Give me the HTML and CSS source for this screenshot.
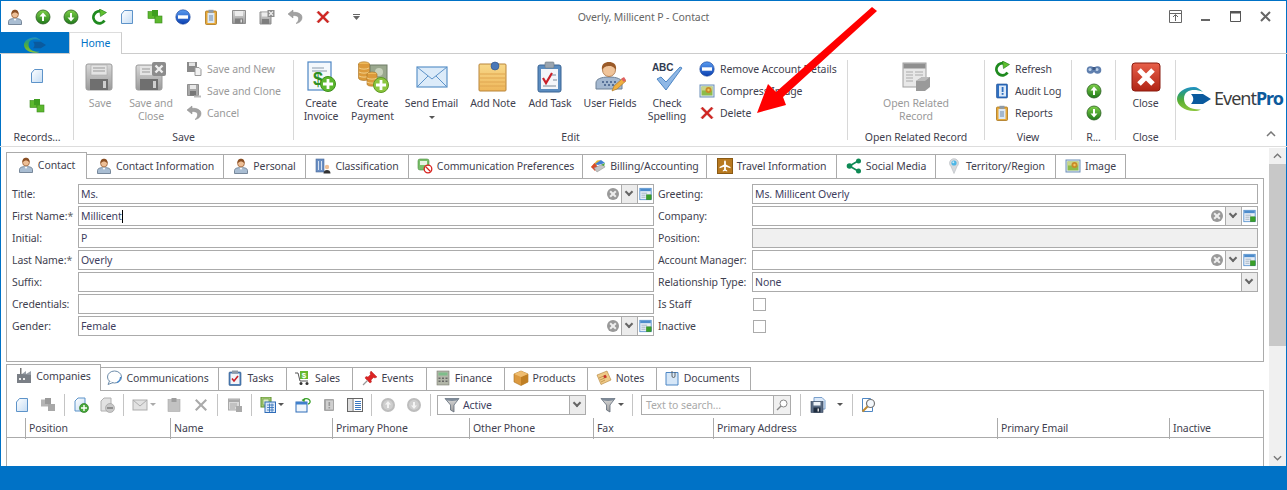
FILE: index.html
```html
<!DOCTYPE html>
<html lang="en">
<head>
    <meta charset="UTF-8">
    <title>Overly, Millicent P - Contact</title>
    <link rel="stylesheet" href="styles.css">
</head>
<body>

<svg class="defs" width="0" height="0">
    <defs>
        <linearGradient id="gGreen" x1="0" y1="0" x2="0" y2="1"><stop offset="0" stop-color="#7fd04a"/><stop offset="1" stop-color="#1f7a1a"/></linearGradient>
        <linearGradient id="gBlue" x1="0" y1="0" x2="0" y2="1"><stop offset="0" stop-color="#5a9cf0"/><stop offset="1" stop-color="#0a3fb0"/></linearGradient>
        <linearGradient id="gGrey" x1="0" y1="0" x2="0" y2="1"><stop offset="0" stop-color="#d8d8d8"/><stop offset="1" stop-color="#9a9a9a"/></linearGradient>
        <linearGradient id="gPage" x1="0" y1="0" x2="1" y2="1"><stop offset="0" stop-color="#ffffff"/><stop offset="1" stop-color="#c4dcf4"/></linearGradient>
        <linearGradient id="gNote" x1="0" y1="0" x2="0" y2="1"><stop offset="0" stop-color="#f8d98a"/><stop offset="1" stop-color="#eeb65a"/></linearGradient>
        <linearGradient id="gRed" x1="0" y1="0" x2="0" y2="1"><stop offset="0" stop-color="#e8604a"/><stop offset="1" stop-color="#b02414"/></linearGradient>
        <linearGradient id="gSwoosh" x1="0" y1="0" x2="0" y2="1"><stop offset="0" stop-color="#1f8fc8"/><stop offset=".3" stop-color="#2fa070"/><stop offset=".6" stop-color="#5cb032"/><stop offset="1" stop-color="#8cc63f"/></linearGradient>

        <symbol id="i-swoosh" viewBox="0 0 34 24"><path d="M17 0C7 0 0 6 0 12s7 12 17 12c3 0 5-.5 7-1.500C14 23 7 19 7 12S12 3 17 3c3 0 6 .5 9 2C23 2 20 0 17 0z" fill="url(#gSwoosh)"/><path d="M14 7h12l8 5-8 5H14c3-3 3-7 0-10z" fill="#0a5a9e"/></symbol>
        <symbol id="i-person" viewBox="0 0 16 16"><path d="M1.500 15.500v-3c0-2 2.500-3 6.500-3s6.500 1 6.500 3v3z" fill="#a9bdd2" stroke="#5f7286" stroke-width=".8"/><path d="M6.500 9.500 8 12l1.500-2.500z" fill="#fff"/><circle cx="8" cy="5.500" r="3.400" fill="#eebf96" stroke="#9a6238" stroke-width=".8"/><path d="M4.500 5.500C4.200 2 6 .8 8 .8s3.800 1.200 3.500 4.700C10.500 3.800 9 3.400 8 3.400S5.500 3.800 4.500 5.500z" fill="#8a4f24"/></symbol>
        <symbol id="i-up" viewBox="0 0 16 16"><circle cx="8" cy="8" r="7" fill="url(#gGreen)" stroke="#2b5e22" stroke-width=".8"/><path d="M8 3.500 4.500 7.500H7v4.500h2V7.500h2.500z" fill="#fff"/></symbol>
        <symbol id="i-down" viewBox="0 0 16 16"><circle cx="8" cy="8" r="7" fill="url(#gGreen)" stroke="#2b5e22" stroke-width=".8"/><path d="M8 12.500 4.500 8.500H7V4h2v4.500h2.500z" fill="#fff"/></symbol>
        <symbol id="i-refresh" viewBox="0 0 16 16"><path d="M13.500 11.500A6 6 0 1 1 11 2.800" fill="none" stroke="#1f8a1f" stroke-width="2.800"/><path d="M8.500 0 15.500 3.500 9.500 7.500z" fill="#5fbf2f" stroke="#1f7a1a" stroke-width=".6"/></symbol>
        <symbol id="i-new" viewBox="0 0 16 16"><path d="M5.500 1.500h8v13h-11V5z" fill="url(#gPage)" stroke="#5d93c9"/></symbol>
        <symbol id="i-cubes" viewBox="0 0 16 16"><rect x="1" y="2.500" width="7" height="7" fill="#5cb82e" stroke="#3a8a1c" stroke-width=".6"/><rect x="8" y="7" width="7" height="7" fill="#5cb82e" stroke="#3a8a1c" stroke-width=".6"/><rect x="5" y="1" width="6" height="6" fill="#3f9e20"/></symbol>
        <symbol id="i-cubes-grey" viewBox="0 0 16 16"><rect x="1" y="2.500" width="7" height="7" fill="#b5b5b5"/><rect x="8" y="7" width="7" height="7" fill="#a8a8a8"/><rect x="5" y="1" width="6" height="6" fill="#9a9a9a"/></symbol>
        <symbol id="i-remove" viewBox="0 0 16 16"><circle cx="8" cy="8" r="7.200" fill="url(#gBlue)" stroke="#123d96" stroke-width=".6"/><rect x="3" y="6.300" width="10" height="3.400" fill="#fff"/></symbol>
        <symbol id="i-clip" viewBox="0 0 16 16"><rect x="2.500" y="2" width="11" height="13.500" rx="1" fill="#e6a93a" stroke="#a8751c" stroke-width=".8"/><rect x="4.500" y="4" width="7" height="10" fill="#dbe8f6"/><rect x="5.500" y=".8" width="5" height="3" fill="#8e9aa8"/><path d="M6 7h4M6 9h4M6 11h4" stroke="#6a87a8"/></symbol>
        <symbol id="i-save" viewBox="0 0 16 16"><path d="M1.500 1.500h13v13h-13z" fill="url(#gGrey)" stroke="#8f8f8f"/><rect x="4" y="2" width="8" height="5" fill="#ececec"/><rect x="4" y="9.500" width="8" height="5" fill="#7e7e7e"/><rect x="9.500" y="10.500" width="1.500" height="3" fill="#ddd"/></symbol>
        <symbol id="i-savex" viewBox="0 0 16 16"><path d="M1 3h11v12H1z" fill="url(#gGrey)" stroke="#8f8f8f"/><rect x="3" y="3.500" width="6" height="4" fill="#ececec"/><rect x="3" y="10" width="7" height="5" fill="#7e7e7e"/><rect x="8.500" y="1" width="7" height="7" fill="#8c8c8c"/><path d="m10 2.500 4 4m0-4-4 4" stroke="#eee" stroke-width="1.300"/></symbol>
        <symbol id="i-savenew" viewBox="0 0 16 16"><path d="M1 1h10v10H1z" fill="#8a8a8a"/><rect x="3" y="1.500" width="6" height="3.500" fill="#e4e4e4"/><path d="M9 6.500h4l2 2v6H9z" fill="#f2f2f2" stroke="#999"/></symbol>
        <symbol id="i-saveclone" viewBox="0 0 16 16"><path d="M1.500 1.500h11v11h-11z" fill="#a8a8a8" stroke="#8f8f8f"/><rect x="4" y="2" width="6" height="4" fill="#e8e8e8"/><rect x="4" y="8" width="6" height="4.500" fill="#777"/><path d="M8 12.500h7v2H8z" fill="#bbb"/></symbol>
        <symbol id="i-undo" viewBox="0 0 16 16"><path d="M6 1 1 5l5 4V6.500c3.500 0 6 .8 5.500 4-.2 1.500-1.200 3-2.500 4 3.500-.5 6-3 6-6 0-4-4.500-5.500-9-5.200z" fill="#a2a2a2" stroke="#8a8a8a" stroke-width=".5"/></symbol>
        <symbol id="i-x" viewBox="0 0 16 16"><path d="M2 3.500 3.500 2 8 6.500 12.500 2 14 3.500 9.500 8l4.500 4.500-1.500 1.500L8 9.500 3.500 14 2 12.500 6.500 8z" fill="#d3231f" stroke="#a81815" stroke-width=".4"/></symbol>
        <symbol id="i-x-grey" viewBox="0 0 16 16"><path d="M2 3.500 3.500 2 8 6.500 12.500 2 14 3.500 9.500 8l4.500 4.500-1.500 1.500L8 9.500 3.500 14 2 12.500 6.500 8z" fill="#aaa"/></symbol>
        <symbol id="i-image" viewBox="0 0 16 16"><rect x="1" y="2" width="14" height="12" fill="#dfe9f4" stroke="#6d8fb8"/><rect x="2.500" y="3.500" width="11" height="9" fill="#8dbb4a"/><rect x="2.500" y="3.500" width="11" height="4" fill="#c9d48a"/><circle cx="9.500" cy="7" r="3" fill="#c98a28"/><circle cx="9.500" cy="7" r="1.200" fill="#f0c860"/></symbol>
        <symbol id="i-bino" viewBox="0 0 16 16"><circle cx="4.500" cy="9" r="3.800" fill="#5f7fae"/><circle cx="11.500" cy="9" r="3.800" fill="#5f7fae"/><circle cx="4" cy="8.500" r="1.500" fill="#bcd0e8"/><circle cx="11" cy="8.500" r="1.500" fill="#bcd0e8"/><rect x="6.500" y="6" width="3" height="3" fill="#3e5a86"/></symbol>
        <symbol id="i-audit" viewBox="0 0 16 16"><rect x="2.500" y="1" width="11" height="14" rx="1" fill="#2f6fc0" stroke="#1c4c90" stroke-width=".6"/><rect x="5" y="2.500" width="7" height="11" fill="#dce9f8"/><rect x="7.700" y="4" width="1.800" height="5" fill="#2f6fc0"/><rect x="7.700" y="10" width="1.800" height="1.800" fill="#2f6fc0"/></symbol>
        <symbol id="i-calc-add" viewBox="0 0 16 16"><rect x="1" y="1" width="14" height="14" fill="#e8eef6" stroke="#4d8ccc"/><rect x="1.500" y="1.500" width="13" height="3" fill="#4d8ccc"/><path d="M3 7h7M3 9.500h5M3 12h5" stroke="#9ab"/><rect x="9" y="9" width="6" height="6" fill="#3aa02a" stroke="#237a18" stroke-width=".5"/></symbol>
        <symbol id="i-building" viewBox="0 0 16 16"><rect x="1" y="1" width="8" height="13" fill="#6a8fc4" stroke="#4a6a98" stroke-width=".6"/><path d="M3 3h1v9H3zm3 0h1v9H6z" fill="#d6e2f2"/><circle cx="12" cy="9" r="2.200" fill="#eebf96"/><path d="M8.500 15.500c0-2.500 1.500-3.500 3.500-3.500s3.500 1 3.500 3.500z" fill="#333"/></symbol>
        <symbol id="i-comm" viewBox="0 0 16 16"><rect x="1" y="1" width="11" height="11" rx="2" fill="#79bf6a" stroke="#4e8f42" stroke-width=".6"/><rect x="3" y="3" width="7" height="4" fill="#e8f4e4"/><circle cx="11" cy="11" r="3.800" fill="#fff" stroke="#d9231f" stroke-width="1.300"/><path d="m8.500 8.500 5 5" stroke="#d9231f" stroke-width="1.300"/></symbol>
        <symbol id="i-bill" viewBox="0 0 16 16"><path d="M1 9 7 2.500 11 2 4 10z" fill="#e8b62a"/><path d="M11 2 15 5 8 7 5 6z" fill="#3f7fd6"/><path d="M1 9 4.500 5 8 9 5 13z" fill="#d94a2a"/><path d="M4 10 13 6 15 9 7 14z" fill="#c4c4c4" stroke="#8a8a8a" stroke-width=".5"/><path d="M15 5 14 8l-3-1z" fill="#4aa83a"/></symbol>
        <symbol id="i-travel" viewBox="0 0 16 16"><rect x=".5" y=".5" width="15" height="15" fill="#b8791f" stroke="#8a5a14"/><path d="M8 2.500c.6 0 .9.700.9 1.500v2.500L13.500 9v1.300L8.900 8.700v2.800l1.300 1v.9L8 12.800l-2.200.6v-.9l1.300-1V8.700L2.500 10.300V9l4.600-2.500V4c0-.8.300-1.500.9-1.500z" fill="#fff"/></symbol>
        <symbol id="i-share" viewBox="0 0 16 16"><path d="M3.500 8 12 3M3.500 8l8.500 5" stroke="#0e8a55" stroke-width="1.600" fill="none"/><circle cx="3.500" cy="8" r="2.800" fill="#0e8a55"/><circle cx="12.500" cy="3" r="2.500" fill="#0e8a55"/><circle cx="12.500" cy="13" r="2.500" fill="#0e8a55"/></symbol>
        <symbol id="i-pin" viewBox="0 0 16 16"><path d="M8 15.500 5 8.500a4.500 4.500 0 1 1 6 0z" fill="#d6d9dc" stroke="#b6bbc0" stroke-width=".6"/><circle cx="8" cy="5" r="2.600" fill="#4cb6e6"/><circle cx="7.300" cy="4.300" r="1" fill="#c8ecfa"/></symbol>
        <symbol id="i-factory" viewBox="0 0 16 16"><rect x="4" y="0" width="1.500" height="6" fill="#777"/><rect x="1" y="6" width="14" height="9" fill="#7a7f86"/><path d="M6 6 10 3v3l5-3v4z" fill="#9aa0a8"/><rect x="3" y="10" width="2" height="2" fill="#eee"/><rect x="7" y="10" width="2" height="2" fill="#eee"/></symbol>
        <symbol id="i-bubble" viewBox="0 0 16 16"><ellipse cx="8.500" cy="7" rx="7" ry="6" fill="#fff" stroke="#6d8caa"/><path d="M3.500 11 2 14.500 7 12.500" fill="#fff" stroke="#6d8caa" stroke-linejoin="round"/><path d="M11 12.500c2-1 3.500-3 3.500-5.500" fill="none" stroke="#3a82cc" stroke-width="1.200"/></symbol>
        <symbol id="i-task" viewBox="0 0 16 16"><rect x="2" y="2" width="12" height="13.500" rx="1" fill="#4d7fb8" stroke="#31598a" stroke-width=".6"/><rect x="3.500" y="3.500" width="9" height="10.500" fill="#f2f5f9"/><rect x="5" y=".5" width="6" height="3.200" fill="#8e9aa8"/><path d="m5 8.500 2 2.500 4-5" fill="none" stroke="#c9202a" stroke-width="1.600"/></symbol>
        <symbol id="i-sales" viewBox="0 0 16 16"><path d="M0 3h3l2 8h8" fill="none" stroke="#555" stroke-width="1"/><rect x="5" y="1" width="8" height="8" fill="#66b82e"/><text x="9" y="8" font-size="8" font-weight="700" text-anchor="middle" fill="#fff" font-family="Liberation Sans">$</text><circle cx="6" cy="13.500" r="1.500" fill="#333"/><circle cx="12" cy="13.500" r="1.500" fill="#333"/></symbol>
        <symbol id="i-event" viewBox="0 0 16 16"><path d="M9 1 15 7l-2 1-1.500-.5L9 10l.5 2-1.500 1-5-5 1-1.500 2 .5 2.500-2.500L8 3z" fill="#dc2424" stroke="#a81515" stroke-width=".4"/><path d="M5.500 10.500 1 15" stroke="#999" stroke-width="1.200"/></symbol>
        <symbol id="i-finance" viewBox="0 0 16 16"><rect x="2" y="1" width="12" height="14" fill="#b2b6a8" stroke="#7d7f74" stroke-width=".6"/><rect x="3.500" y="2.500" width="9" height="3" fill="#7ebd8a"/><path d="M3.500 7.500h2v1.500h-2zm3.500 0h2v1.500H7zm3.500 0h2v1.500h-2zm-7 3h2V12h-2zm3.500 0h2V12H7zm3.500 0h2V12h-2z" fill="#666"/></symbol>
        <symbol id="i-box" viewBox="0 0 16 16"><path d="M8 1 15 4v8l-7 3.500L1 12V4z" fill="#dc9a40" stroke="#a8701f" stroke-width=".6"/><path d="M8 7 15 4v8l-7 3.500z" fill="#c07f24"/><path d="M1 4 8 7 15 4 8 1z" fill="#efbd70"/></symbol>
        <symbol id="i-note" viewBox="0 0 16 16"><path d="M1 5 11 1l4 9-10 4.500z" fill="#efc987" stroke="#b08238" stroke-width=".6"/><path d="m3 8 7-3m-6 5 7-3m-6 5 4-2" stroke="#b08238" stroke-width=".7"/><circle cx="9" cy="6.500" r="1.500" fill="#c9302a"/></symbol>
        <symbol id="i-docs" viewBox="0 0 16 16"><path d="M2 2.500h12v12.500H2z" fill="#d6e7f8" stroke="#4d86c4"/><path d="M8 1v5a1.500 1.500 0 0 0 3 0V2" fill="none" stroke="#555" stroke-width=".9"/></symbol>
        <symbol id="i-add-doc" viewBox="0 0 16 16"><path d="M5 1h7v13H2V4z" fill="url(#gPage)" stroke="#5d93c9"/><circle cx="11" cy="11" r="4.500" fill="#49a83a" stroke="#23701a" stroke-width=".6"/><path d="M11 8v6M8 11h6" stroke="#fff" stroke-width="1.400"/></symbol>
        <symbol id="i-del-doc" viewBox="0 0 16 16"><path d="M5 1h7v13H2V4z" fill="#e2e2e2" stroke="#b0b0b0"/><circle cx="11" cy="11" r="4.500" fill="#c8c8c8" stroke="#999" stroke-width=".6"/><path d="M8 11h6" stroke="#777" stroke-width="1.400"/></symbol>
        <symbol id="i-mail-grey" viewBox="0 0 16 16"><rect x="1" y="3" width="14" height="10" fill="#e2e2e2" stroke="#adadad"/><path d="m1 3 7 6 7-6" fill="none" stroke="#adadad"/></symbol>
        <symbol id="i-clip-grey" viewBox="0 0 16 16"><rect x="2" y="2.500" width="12" height="12" fill="#c2c2c2" stroke="#a8a8a8" stroke-width=".6"/><rect x="5.500" y="1" width="5" height="4" fill="#9e9e9e"/></symbol>
        <symbol id="i-report-grey" viewBox="0 0 16 16"><rect x="1.500" y="2" width="11" height="11" fill="#dadada" stroke="#aaa"/><rect x="2" y="2.500" width="10" height="2.500" fill="#aaa"/><path d="M3 7h7M3 9h7M3 11h5" stroke="#aaa"/><rect x="9" y="9" width="6" height="6" fill="#aaa"/></symbol>
        <symbol id="i-layout" viewBox="0 0 16 16"><rect x="1" y="0" width="10" height="10" fill="#a9cf7c" stroke="#5e8f2c"/><rect x="3" y="2" width="6" height="6" fill="#dcecc6" stroke="#5e8f2c" stroke-width=".6"/><rect x="5" y="5" width="10.500" height="10.500" fill="#dbe9f9" stroke="#2f6cb8"/><path d="M7 8h7M7 10.500h7M7 13h7M9.500 6.500V15M12 6.500V15" stroke="#2f6cb8" stroke-width=".8"/></symbol>
        <symbol id="i-window" viewBox="0 0 16 16"><rect x="1" y="5" width="11" height="10" fill="#f0f6fc" stroke="#2f6cb8"/><rect x="1" y="5" width="11" height="2.500" fill="#3f80cc"/><path d="M8 4C9 1.500 12 .8 14 2.500S15 7 13 7" fill="none" stroke="#3aa02a" stroke-width="1.300"/><path d="M6.500 3 10 1 9.500 5z" fill="#3aa02a"/></symbol>
        <symbol id="i-book-grey" viewBox="0 0 16 16"><rect x="3" y="2" width="10" height="12" rx="1" fill="#a6a6a6"/><rect x="5" y="3.500" width="7" height="9" fill="#cfcfcf"/><rect x="7.500" y="5" width="1.600" height="4" fill="#999"/><rect x="7.500" y="10" width="1.600" height="1.500" fill="#999"/></symbol>
        <symbol id="i-panel" viewBox="0 0 16 16"><rect x=".5" y="1.500" width="15" height="13" fill="#fff" stroke="#666"/><rect x="1" y="2" width="4" height="12" fill="#ddd"/><path d="M6 2v12" stroke="#666"/><path d="M8 4.500h6M8 6.500h6M8 8.500h6M8 10.500h6M8 12.500h6" stroke="#3b78c0"/></symbol>
        <symbol id="i-up-grey" viewBox="0 0 16 16"><circle cx="8" cy="8" r="7" fill="#bdbdbd"/><circle cx="8" cy="8" r="5" fill="#cfcfcf"/><path d="M8 4 5 7.500h2V11h2V7.500h2z" fill="#f4f4f4"/></symbol>
        <symbol id="i-down-grey" viewBox="0 0 16 16"><circle cx="8" cy="8" r="7" fill="#bdbdbd"/><circle cx="8" cy="8" r="5" fill="#cfcfcf"/><path d="M8 12 5 8.500h2V5h2v3.500h2z" fill="#f4f4f4"/></symbol>
        <symbol id="i-funnel" viewBox="0 0 16 16"><path d="M1 1.500h14L10 8v7l-3.500-2V8z" fill="url(#gGrey)" stroke="#5f6b78" stroke-width=".8"/><ellipse cx="8" cy="2.500" rx="6.500" ry="1.400" fill="#7e8a98"/></symbol>
        <symbol id="i-save-blue" viewBox="0 0 16 16"><path d="M4 .5h8l3 3V12H4z" fill="#dbe9f9" stroke="#7aa0cc"/><rect x="1" y="4.500" width="12" height="11" fill="#5a6c84" stroke="#2f4058" stroke-width=".6"/><rect x="3.500" y="5" width="7" height="3.500" fill="#eef3f8"/><rect x="3.500" y="10.500" width="7" height="5" fill="#1f2d40"/><rect x="7.500" y="11.500" width="1.500" height="3" fill="#ddd"/></symbol>
        <symbol id="i-lens" viewBox="0 0 16 16"><path d="M1.500 1.500h8l2 2v11h-10z" fill="#fff" stroke="#4d86c4"/><circle cx="9.500" cy="6.500" r="4" fill="#f4f8fc" stroke="#777" stroke-width="1.200"/><path d="m6.500 9.500-5 5" stroke="#c08a30" stroke-width="2"/></symbol>

        <symbol id="l-save" viewBox="0 0 32 32"><rect x="2" y="3" width="26" height="26" rx="2" fill="url(#gGrey)" stroke="#9a9a9a"/><rect x="7" y="4" width="16" height="10" fill="#e4e4e4" stroke="#aaa" stroke-width=".6"/><path d="M9 7h12M9 10h12" stroke="#999"/><rect x="6" y="18" width="18" height="11" fill="#6f6f6f"/><rect x="19" y="20" width="3" height="7" fill="#cfcfcf"/></symbol>
        <symbol id="l-savex" viewBox="0 0 32 32"><rect x="1" y="4" width="26" height="25" rx="2" fill="url(#gGrey)" stroke="#9a9a9a"/><rect x="5" y="5" width="12" height="9" fill="#e4e4e4"/><path d="M7 8h8M7 11h8" stroke="#999"/><rect x="5" y="18" width="18" height="11" fill="#6f6f6f"/><rect x="18" y="20" width="3" height="7" fill="#cfcfcf"/><rect x="17" y="1" width="14" height="14" rx="2" fill="#8c8c8c"/><path d="m20.500 4.500 7 7m0-7-7 7" stroke="#eee" stroke-width="2.400"/></symbol>
        <symbol id="l-invoice" viewBox="0 0 32 32"><rect x="3" y="1" width="23" height="28" fill="#f4f8fc" stroke="#4d86c4" stroke-width="1.200"/><path d="M7 7h12M7 10h15" stroke="#8a9aaa"/><text x="13" y="24" font-size="18" font-weight="700" text-anchor="middle" fill="#2e8f22" font-family="Liberation Sans">$</text><circle cx="23" cy="23" r="7.500" fill="#5cb82e" stroke="#3e8f1c"/><path d="M23 18v10M18 23h10" stroke="#fff" stroke-width="2.800"/></symbol>
        <symbol id="l-payment" viewBox="0 0 32 32"><rect x="13" y="4" width="17" height="16" fill="#9aa88e" stroke="#6f7d66"/><circle cx="22" cy="11" r="4" fill="#c8d2bc"/><ellipse cx="7" cy="3" rx="5.500" ry="2.200" fill="#eeb95a" stroke="#a8701f" stroke-width=".6"/><path d="M1.500 3v14c0 1.500 2.500 2.500 5.500 2.500s5.500-1 5.500-2.500V3" fill="#dc9a3a" stroke="#a8701f" stroke-width=".6"/><path d="M2 7c2 1.500 8 1.500 10 0M2 11c2 1.500 8 1.500 10 0M2 15c2 1.500 8 1.500 10 0" fill="none" stroke="#f2d08a"/><ellipse cx="15" cy="13" rx="5" ry="2" fill="#eeb95a" stroke="#a8701f" stroke-width=".6"/><path d="M10 13v10c0 1.500 2.200 2.200 5 2.200s5-.7 5-2.200V13" fill="#dc9a3a" stroke="#a8701f" stroke-width=".6"/><path d="M10 17c2 1.500 8 1.500 10 0M10 21c2 1.500 8 1.500 10 0" fill="none" stroke="#f2d08a"/><circle cx="24" cy="24" r="7.500" fill="#8cc63f" stroke="#5e9a22"/><path d="M24 19v10M19 24h10" stroke="#fff" stroke-width="2.800"/></symbol>
        <symbol id="l-mail" viewBox="0 0 32 32"><rect x="1" y="6" width="30" height="20" fill="#dcebf9" stroke="#5d93c9" stroke-width="1.200"/><path d="m1 6 15 12L31 6M1 26l11-11M31 26 20 15" fill="none" stroke="#5d93c9"/></symbol>
        <symbol id="l-note" viewBox="0 0 32 32"><rect x="2" y="3" width="27" height="27" rx="1" fill="url(#gNote)" stroke="#b9853a"/><path d="M3 13h25M3 17h25M3 21h25M3 25h25" stroke="#e0a650"/><circle cx="18" cy="5" r="4" fill="#4a78b8" stroke="#2d4f86" stroke-width=".6"/></symbol>
        <symbol id="l-task" viewBox="0 0 32 32"><rect x="4" y="4" width="23" height="27" rx="2" fill="#5a8cc0" stroke="#3a6494"/><rect x="7" y="8" width="17" height="20" fill="#f4f6f9"/><rect x="11" y="1" width="9" height="6" rx="1" fill="#9aa5b0" stroke="#6e7882" stroke-width=".6"/><path d="m9 17 3 5 6-10" fill="none" stroke="#c9202a" stroke-width="2.200"/><path d="M18 14h4M19 19h4M9 25h13" stroke="#7a8a9a"/></symbol>
        <symbol id="l-user" viewBox="0 0 32 32"><path d="M2 28v-6c0-4 5-6 13-6s13 2 13 6v6z" fill="#a4b8d0" stroke="#6d8096"/><g fill="#3e5a86"><circle cx="9" cy="21" r="1"/><circle cx="13" cy="21" r="1"/><circle cx="17" cy="21" r="1"/><circle cx="21" cy="21" r="1"/><circle cx="11" cy="24" r="1"/><circle cx="15" cy="24" r="1"/><circle cx="19" cy="24" r="1"/></g><circle cx="15" cy="9" r="6.500" fill="#f0c49a" stroke="#a66d3c" stroke-width=".8"/><path d="M8 9C7 3 11 1 15 1s8 2 7 8c-2-3.500-5-4-7-4s-5 .5-7 4z" fill="#9a5a28"/><path d="m18 30 2-5 9-8 3 3-9 8z" fill="#f0b040" stroke="#a8701f" stroke-width=".6"/><path d="m27 18 3-2 2 3-2 2z" fill="#e06060"/></symbol>
        <symbol id="l-check" viewBox="0 0 32 32"><text x="1" y="10" font-size="10" font-weight="700" fill="#2f3b52" font-family="Liberation Sans">ABC</text><path d="M6 18 15 29 31 7l-2-1-14 15-5-5z" fill="#8fb8e6" stroke="#4d86c4"/></symbol>
        <symbol id="l-related" viewBox="0 0 32 32"><rect x="3" y="2" width="23" height="24" fill="#e8e8e8" stroke="#a0a0a0"/><rect x="3.500" y="2.500" width="22" height="5" fill="#8f8f8f"/><path d="M6 11h7M6 14h7M6 17h7M6 20h7M15 11h8M15 14h8" stroke="#aaa"/><path d="M16 20l6-4h8v10l-5 4h-9z" fill="#9a9a9a"/><path d="M16 20l6-4h8l-5 4z" fill="#bbb"/></symbol>
        <symbol id="l-close" viewBox="0 0 32 32"><rect x="2" y="2" width="28" height="28" rx="3" fill="url(#gRed)" stroke="#8a1c10"/><path d="m9 9 14 14m0-14L9 23" stroke="#fff" stroke-width="5"/></symbol>
    </defs>
</svg>

<div class="window">

    <div class="titlebar">
        <div class="qat">
            <svg class="ic"><use href="#i-person"/></svg>
            <svg class="ic"><use href="#i-up"/></svg>
            <svg class="ic"><use href="#i-down"/></svg>
            <svg class="ic"><use href="#i-refresh"/></svg>
            <svg class="ic"><use href="#i-new"/></svg>
            <svg class="ic"><use href="#i-cubes"/></svg>
            <svg class="ic"><use href="#i-remove"/></svg>
            <svg class="ic"><use href="#i-clip"/></svg>
            <svg class="ic"><use href="#i-save"/></svg>
            <svg class="ic"><use href="#i-savex"/></svg>
            <svg class="ic"><use href="#i-undo"/></svg>
            <svg class="ic"><use href="#i-x"/></svg>
            <svg class="qat-more" viewBox="0 0 7 6"><path d="M0 0h7v1H0zM0 2h7L3.500 6z" fill="#666"/></svg>
        </div>
        <div class="title">Overly, Millicent P - Contact</div>
        <div class="winbtns">
            <svg class="winbtn" viewBox="0 0 14 14"><path d="M.5.500h12v12H.5zM.5 3.500h12M6.500 11V5M4 7l2.500-2.500L9 7" fill="none" stroke="#666"/></svg>
            <svg class="winbtn" viewBox="0 0 14 14"><path d="M2 9h9v2H2z" fill="#666"/></svg>
            <svg class="winbtn" viewBox="0 0 14 14"><path d="M1.500 1.500h10v10h-10z" fill="none" stroke="#555"/><path d="M1 1h11v2.500H1z" fill="#555"/></svg>
            <svg class="winbtn" viewBox="0 0 14 14"><path d="m2 2 9 9m0-9-9 9" stroke="#666" stroke-width="2"/></svg>
        </div>
    </div>

    <div class="ribbon-tabs">
        <div class="app-btn">
            <svg class="app-logo"><use href="#i-swoosh"/></svg>
        </div>
        <div class="home-tab">Home</div>
    </div>

    <div class="ribbon">
        <div class="rgroup g-records">
            <div class="rbody">
                <div class="rcol-center">
                    <svg class="ic"><use href="#i-new"/></svg>
                    <svg class="ic"><use href="#i-cubes"/></svg>
                </div>
            </div>
            <div class="rlabel">Records...</div>
        </div>
        <div class="rgroup g-save">
            <div class="rbody">
                <div class="lbtn off w50"><svg class="lic"><use href="#l-save"/></svg><span>Save</span></div>
                <div class="lbtn off w52"><svg class="lic"><use href="#l-savex"/></svg><span>Save and<br>Close</span></div>
                <div class="rcol off">
                    <div class="sbtn"><svg class="ic"><use href="#i-savenew"/></svg>Save and New</div>
                    <div class="sbtn"><svg class="ic"><use href="#i-saveclone"/></svg>Save and Clone</div>
                    <div class="sbtn"><svg class="ic"><use href="#i-undo"/></svg>Cancel</div>
                </div>
            </div>
            <div class="rlabel">Save</div>
        </div>
        <div class="rgroup g-edit">
            <div class="rbody">
                <div class="lbtn w52"><svg class="lic"><use href="#l-invoice"/></svg><span>Create<br>Invoice</span></div>
                <div class="lbtn w51"><svg class="lic"><use href="#l-payment"/></svg><span>Create<br>Payment</span></div>
                <div class="lbtn w67"><svg class="lic"><use href="#l-mail"/></svg><span>Send Email<br><i class="caret"></i></span></div>
                <div class="lbtn w56"><svg class="lic"><use href="#l-note"/></svg><span>Add Note</span></div>
                <div class="lbtn w58"><svg class="lic"><use href="#l-task"/></svg><span>Add Task</span></div>
                <div class="lbtn w62"><svg class="lic"><use href="#l-user"/></svg><span>User Fields</span></div>
                <div class="lbtn w52"><svg class="lic"><use href="#l-check"/></svg><span>Check<br>Spelling</span></div>
                <div class="rcol edit-col">
                    <div class="sbtn"><svg class="ic"><use href="#i-remove"/></svg>Remove Account Details</div>
                    <div class="sbtn"><svg class="ic"><use href="#i-image"/></svg>Compress Image</div>
                    <div class="sbtn"><svg class="ic"><use href="#i-x"/></svg>Delete</div>
                </div>
            </div>
            <div class="rlabel">Edit</div>
        </div>
        <div class="rgroup g-related">
            <div class="rbody">
                <div class="lbtn off w136"><svg class="lic"><use href="#l-related"/></svg><span>Open Related<br>Record</span></div>
            </div>
            <div class="rlabel">Open Related Record</div>
        </div>
        <div class="rgroup g-view">
            <div class="rbody">
                <div class="rcol view-col">
                    <div class="sbtn"><svg class="ic"><use href="#i-refresh"/></svg>Refresh</div>
                    <div class="sbtn"><svg class="ic"><use href="#i-audit"/></svg>Audit Log</div>
                    <div class="sbtn"><svg class="ic"><use href="#i-clip"/></svg>Reports</div>
                </div>
            </div>
            <div class="rlabel">View</div>
        </div>
        <div class="rgroup g-r">
            <div class="rbody">
                <div class="rcol-center three">
                    <svg class="ic"><use href="#i-bino"/></svg>
                    <svg class="ic"><use href="#i-up"/></svg>
                    <svg class="ic"><use href="#i-down"/></svg>
                </div>
            </div>
            <div class="rlabel">R...</div>
        </div>
        <div class="rgroup g-close">
            <div class="rbody">
                <div class="lbtn w59"><svg class="lic"><use href="#l-close"/></svg><span>Close</span></div>
            </div>
            <div class="rlabel">Close</div>
        </div>
        <div class="logo-box">
            <svg class="logo-swoosh"><use href="#i-swoosh"/></svg>
            <span class="logo-text">Event<b>Pro</b></span>
            <svg class="collapse" viewBox="0 0 10 6"><path d="m1 5 4-4 4 4" fill="none" stroke="#777" stroke-width="1.500"/></svg>
        </div>
    </div>

    <div class="content">
        <div class="content-main">

            <div class="tabs top-tabs">
                <div class="tab active t-contact"><svg class="ic"><use href="#i-person"/></svg>Contact</div>
                <div class="tab t-info"><svg class="ic"><use href="#i-person"/></svg>Contact Information</div>
                <div class="tab t-personal"><svg class="ic"><use href="#i-person"/></svg>Personal</div>
                <div class="tab t-class"><svg class="ic"><use href="#i-building"/></svg>Classification</div>
                <div class="tab t-comm"><svg class="ic"><use href="#i-comm"/></svg>Communication Preferences</div>
                <div class="tab t-bill"><svg class="ic"><use href="#i-bill"/></svg>Billing/Accounting</div>
                <div class="tab t-travel"><svg class="ic"><use href="#i-travel"/></svg>Travel Information</div>
                <div class="tab t-social"><svg class="ic"><use href="#i-share"/></svg>Social Media</div>
                <div class="tab t-terr"><svg class="ic"><use href="#i-pin"/></svg>Territory/Region</div>
                <div class="tab t-image"><svg class="ic"><use href="#i-image"/></svg>Image</div>
            </div>

            <div class="form-panel">
                <div class="form-col left-col">
                    <div class="row"><label>Title:</label>
                        <div class="field"><span class="val">Ms.</span><i class="clear"></i><i class="drop"></i><svg class="add"><use href="#i-calc-add"/></svg></div></div>
                    <div class="row"><label>First Name:<em>*</em></label>
                        <div class="field"><span class="val">Millicent<i class="cursor"></i></span></div></div>
                    <div class="row"><label>Initial:</label>
                        <div class="field"><span class="val">P</span></div></div>
                    <div class="row"><label>Last Name:<em>*</em></label>
                        <div class="field"><span class="val">Overly</span></div></div>
                    <div class="row"><label>Suffix:</label>
                        <div class="field"></div></div>
                    <div class="row"><label>Credentials:</label>
                        <div class="field"></div></div>
                    <div class="row"><label>Gender:</label>
                        <div class="field"><span class="val">Female</span><i class="clear"></i><i class="drop"></i><svg class="add"><use href="#i-calc-add"/></svg></div></div>
                </div>
                <div class="form-col right-col">
                    <div class="row"><label>Greeting:</label>
                        <div class="field"><span class="val">Ms. Millicent Overly</span></div></div>
                    <div class="row"><label>Company:</label>
                        <div class="field"><span class="val"></span><i class="clear"></i><i class="drop"></i><svg class="add"><use href="#i-calc-add"/></svg></div></div>
                    <div class="row"><label>Position:</label>
                        <div class="field disabled"></div></div>
                    <div class="row"><label>Account Manager:</label>
                        <div class="field"><span class="val"></span><i class="clear"></i><i class="drop"></i><svg class="add"><use href="#i-calc-add"/></svg></div></div>
                    <div class="row"><label>Relationship Type:</label>
                        <div class="field"><span class="val">None</span><i class="drop"></i></div></div>
                    <div class="row"><label>Is Staff</label><div class="check"></div></div>
                    <div class="row"><label>Inactive</label><div class="check"></div></div>
                </div>
            </div>

            <div class="tabs bottom-tabs">
                <div class="tab active b-comp"><svg class="ic"><use href="#i-factory"/></svg>Companies</div>
                <div class="tab b-comm"><svg class="ic"><use href="#i-bubble"/></svg>Communications</div>
                <div class="tab b-task"><svg class="ic"><use href="#i-task"/></svg>Tasks</div>
                <div class="tab b-sales"><svg class="ic"><use href="#i-sales"/></svg>Sales</div>
                <div class="tab b-event"><svg class="ic"><use href="#i-event"/></svg>Events</div>
                <div class="tab b-fin"><svg class="ic"><use href="#i-finance"/></svg>Finance</div>
                <div class="tab b-prod"><svg class="ic"><use href="#i-box"/></svg>Products</div>
                <div class="tab b-note"><svg class="ic"><use href="#i-note"/></svg>Notes</div>
                <div class="tab b-doc"><svg class="ic"><use href="#i-docs"/></svg>Documents</div>
            </div>

            <div class="grid-panel">
                <div class="toolbar">
                    <div class="tb"><svg class="ic"><use href="#i-new"/></svg></div>
                    <div class="tb"><svg class="ic"><use href="#i-cubes-grey"/></svg></div>
                    <div class="sep"></div>
                    <div class="tb"><svg class="ic"><use href="#i-add-doc"/></svg></div>
                    <div class="tb"><svg class="ic"><use href="#i-del-doc"/></svg></div>
                    <div class="sep"></div>
                    <div class="tb tb-menu"><svg class="ic"><use href="#i-mail-grey"/></svg><i class="caret light"></i></div>
                    <div class="tb"><svg class="ic"><use href="#i-clip-grey"/></svg></div>
                    <div class="tb tb-wide"><svg class="ic"><use href="#i-x-grey"/></svg></div>
                    <div class="sep"></div>
                    <div class="tb tb-wide"><svg class="ic"><use href="#i-report-grey"/></svg></div>
                    <div class="sep"></div>
                    <div class="tb tb-menu"><svg class="ic"><use href="#i-layout"/></svg><i class="caret"></i></div>
                    <div class="tb tb-wide"><svg class="ic"><use href="#i-window"/></svg></div>
                    <div class="tb"><svg class="ic"><use href="#i-book-grey"/></svg></div>
                    <div class="tb"><svg class="ic"><use href="#i-panel"/></svg></div>
                    <div class="sep"></div>
                    <div class="tb"><svg class="ic"><use href="#i-up-grey"/></svg></div>
                    <div class="tb"><svg class="ic"><use href="#i-down-grey"/></svg></div>
                    <div class="sep"></div>
                    <div class="field filter-box"><svg class="ic"><use href="#i-funnel"/></svg><span class="val">Active</span><i class="drop"></i></div>
                    <div class="tb tb-menu"><svg class="ic"><use href="#i-funnel"/></svg><i class="caret"></i></div>
                    <div class="sep"></div>
                    <div class="field search-box"><span class="val placeholder">Text to search...</span>
                        <div class="search-btn"><svg viewBox="0 0 12 12"><circle cx="7.500" cy="4.500" r="3.500" fill="#fff" stroke="#888"/><path d="m5 7-4 4" stroke="#888" stroke-width="1.500"/></svg></div></div>
                    <div class="sep sep-search"></div>
                    <div class="tb tb-save"><svg class="ic"><use href="#i-save-blue"/></svg><i class="caret"></i></div>
                    <div class="sep"></div>
                    <div class="tb"><svg class="ic"><use href="#i-lens"/></svg></div>
                </div>
                <div class="grid-head">
                    <div class="gh"></div>
                    <div class="gh">Position</div>
                    <div class="gh">Name</div>
                    <div class="gh">Primary Phone</div>
                    <div class="gh">Other Phone</div>
                    <div class="gh">Fax</div>
                    <div class="gh">Primary Address</div>
                    <div class="gh">Primary Email</div>
                    <div class="gh">Inactive</div>
                </div>
            </div>
        </div>

        <div class="scrollbar">
            <div class="sb-btn"><svg viewBox="0 0 10 6"><path d="m1 5 4-4 4 4" fill="none" stroke="#777" stroke-width="1.500"/></svg></div>
            <div class="sb-thumb"></div>
            <div class="sb-rest"></div>
            <div class="sb-btn"><svg viewBox="0 0 10 6"><path d="m1 1 4 4 4-4" fill="none" stroke="#777" stroke-width="1.500"/></svg></div>
        </div>
    </div>

    <div class="statusbar"></div>
</div>

<!-- red annotation arrow drawn over the screenshot -->
<svg class="arrow" viewBox="0 0 1287 490"><path d="M757 113 768 84 776 92 872 7 877 11 783 97 786 105z" fill="#f00"/></svg>

</body>
</html>
```

FILE: styles.css
```css
html, body {
    margin: 0;
    height: 100%;
    overflow: hidden;
}
body {
    font-family: "Noto Sans", "Liberation Sans", sans-serif;
    font-size: 10.5px;
    letter-spacing: -0.1px;
    color: #3f3f4f;
    background: #fff;
}
.defs {
    position: absolute;
}
.window {
    width: 1287px;
    height: 490px;
    box-sizing: border-box;
    border: 1px solid #0072c6;
    border-bottom: 0;
    display: flex;
    flex-direction: column;
}
.ic {
    width: 16px;
    height: 16px;
    flex: none;
}
.lic {
    width: 32px;
    height: 32px;
    display: block;
    margin: 0 auto 4px;
}

/* title bar */
.titlebar {
    height: 31px;
    display: flex;
    align-items: center;
    position: relative;
}
.qat {
    display: flex;
    align-items: center;
    gap: 12px;
    padding-left: 6px;
}
.qat-more {
    width: 7px;
    height: 6px;
    margin-left: 10px;
}
.title {
    position: absolute;
    left: 0;
    right: 0;
    text-align: center;
    color: #666;
}
.winbtns {
    margin-left: auto;
    display: flex;
    gap: 16px;
    padding-right: 13px;
}
.winbtn {
    width: 14px;
    height: 14px;
}

/* ribbon */
.ribbon-tabs {
    height: 22px;
    box-sizing: border-box;
    display: flex;
    border-bottom: 1px solid #ccc;
    margin: 0 -1px;
}
.app-btn {
    width: 69px;
    height: 21px;
    background: #0072c6;
    display: flex;
    align-items: flex-end;
    justify-content: center;
}
.app-logo {
    width: 22px;
    height: 16px;
}
.home-tab {
    width: 53px;
    height: 22px;
    box-sizing: border-box;
    border: 1px solid #ccc;
    border-top-color: #ddd;
    border-bottom: 0;
    background: #fff;
    color: #0072c6;
    text-align: center;
    line-height: 20px;
    position: relative;
    margin-bottom: -1px;
}
.ribbon {
    height: 93px;
    box-sizing: border-box;
    display: flex;
    border-bottom: 1px solid #ddd;
    padding-top: 6px;
    margin: 0 -1px;
    padding-left: 1px;
}
.rgroup {
    height: 80px;
    box-sizing: content-box;
    border-right: 1px solid #d8d8d8;
    display: flex;
    flex-direction: column;
    flex: none;
}
.rbody {
    flex: 1;
    display: flex;
    min-height: 0;
}
.rlabel {
    height: 14px;
    line-height: 14px;
    text-align: center;
    margin-bottom: -4px;
    white-space: nowrap;
}
.g-records { width: 72px; }
.g-save { width: 219px; }
.g-edit { width: 553px; }
.g-related { width: 136px; }
.g-view { width: 86px; }
.g-r { width: 43px; }
.g-close { width: 59px; }

.rcol-center {
    width: 72px;
    display: flex;
    flex-direction: column;
    align-items: center;
    gap: 14px;
    padding-top: 8px;
}
.rcol-center.three {
    width: 43px;
    gap: 6px;
    padding-top: 1px;
}
.lbtn {
    flex: none;
    text-align: center;
    line-height: 13px;
    padding-top: 1px;
    white-space: nowrap;
}
.off {
    color: #9a9a9a;
}
.w50 { width: 50px; }
.w51 { width: 51px; }
.w52 { width: 52px; }
.w56 { width: 56px; }
.w58 { width: 58px; }
.w59 { width: 59px; }
.w62 { width: 62px; }
.w67 { width: 67px; }
.w136 { width: 136px; }
.rcol {
    display: flex;
    flex-direction: column;
    gap: 6px;
    padding: 1px 0 0 9px;
}
.edit-col { padding-left: 6px; }
.view-col { padding-left: 9px; }
.sbtn {
    display: flex;
    align-items: center;
    gap: 5px;
    height: 16px;
    white-space: nowrap;
}
.g-save .lbtn:first-child { margin-left: 1px; }
.g-edit .lbtn:first-child { margin-left: 1px; }
.caret {
    display: inline-block;
    width: 0;
    height: 0;
    border: 3px solid transparent;
    border-top: 3px solid #555;
    border-bottom: 0;
    vertical-align: middle;
}
.caret.light {
    border-top-color: #aaa;
}
.logo-box {
    flex: 1;
    position: relative;
    display: flex;
    align-items: flex-start;
    padding: 27px 0 0 1px;
    gap: 3px;
}
.logo-swoosh {
    width: 34px;
    height: 24px;
    flex: none;
}
.logo-text {
    font-size: 18px;
    line-height: 22px;
    color: #3c3c3c;
    letter-spacing: -1px;
}
.logo-text b {
    color: #0d5a9c;
}
.collapse {
    position: absolute;
    right: 11px;
    bottom: 9px;
    width: 10px;
    height: 6px;
}

/* content */
.content {
    flex: 1;
    min-height: 0;
    display: flex;
    margin-right: -1px;
}
.content-main {
    width: 1258px;
    padding: 5px 0 0 5px;
    margin-right: 5px;
    box-sizing: content-box;
    flex: none;
    display: flex;
    flex-direction: column;
}
.tabs {
    display: flex;
    align-items: flex-end;
    position: relative;
    z-index: 1;
}
.top-tabs { height: 26px; }
.bottom-tabs { height: 26px; margin-top: 2px; }
.tab {
    height: 24px;
    box-sizing: border-box;
    padding-bottom: 1px;
    border: 1px solid #ababab;
    border-left: 0;
    border-bottom: 0;
    display: flex;
    align-items: center;
    justify-content: center;
    gap: 4px;
    white-space: nowrap;
    background: #fff;
}
.tab.active {
    height: 27px;
    padding-bottom: 3px;
    border-left: 1px solid #ababab;
    margin-bottom: -1px;
}
.bottom-tabs .tab {
    height: 23px;
    padding-bottom: 2px;
    padding-right: 4px;
}
.bottom-tabs .tab.active {
    height: 27px;
    padding-bottom: 5px;
    padding-right: 0;
}
.t-contact { width: 81px; }
.t-info { width: 137px; }
.t-personal { width: 82px; }
.t-class { width: 103px; }
.t-comm { width: 174px; }
.t-bill { width: 124px; }
.t-travel { width: 130px; }
.t-social { width: 99px; }
.t-terr { width: 120px; }
.t-image { width: 70px; }
.b-comp { width: 95px; }
.b-comm { width: 118px; }
.b-task { width: 68px; }
.b-sales { width: 66px; }
.b-event { width: 74px; }
.b-fin { width: 78px; }
.b-prod { width: 83px; }
.b-note { width: 69px; }
.b-doc { width: 94px; }

.form-panel {
    height: 184px;
    box-sizing: border-box;
    border: 1px solid #ababab;
    padding: 5px 5px 0;
    display: flex;
    gap: 4px;
}
.form-col {
    display: flex;
    flex-direction: column;
    gap: 2px;
}
.left-col { width: 642px; }
.right-col { width: 600px; }
.row {
    height: 20px;
    display: flex;
    align-items: center;
}
.row label {
    flex: none;
    white-space: nowrap;
}
.left-col label { width: 66px; }
.right-col label { width: 94px; }
.row label em {
    font-style: normal;
    color: #666;
}
.field {
    flex: 1;
    height: 20px;
    box-sizing: border-box;
    border: 1px solid #ababab;
    display: flex;
    align-items: center;
    background: #fff;
    min-width: 0;
}
.field.disabled {
    background: #f0f0f0;
}
.val {
    flex: 1;
    padding-left: 2px;
    white-space: nowrap;
    color: #3f3f5f;
}
.cursor {
    display: inline-block;
    width: 1px;
    height: 13px;
    background: #000;
    vertical-align: middle;
}
.clear {
    width: 12px;
    height: 12px;
    border-radius: 50%;
    background: #999;
    margin-right: 2px;
    position: relative;
    flex: none;
}
.clear::before,
.clear::after {
    content: "";
    position: absolute;
    left: 5px;
    top: 2px;
    width: 2px;
    height: 8px;
    background: #eee;
    transform: rotate(45deg);
}
.clear::after {
    transform: rotate(-45deg);
}
.drop {
    width: 16px;
    height: 18px;
    flex: none;
    box-sizing: border-box;
    border-left: 1px solid #ababab;
    background: #ececec;
    position: relative;
}
.drop::after {
    content: "";
    position: absolute;
    left: 4px;
    top: 4px;
    width: 4px;
    height: 4px;
    border: solid #666;
    border-width: 0 2px 2px 0;
    transform: rotate(45deg);
}
.add {
    width: 16px;
    height: 18px;
    flex: none;
    box-sizing: border-box;
    padding: 2px 1px;
    border-left: 1px solid #ababab;
}
.check {
    width: 13px;
    height: 13px;
    box-sizing: border-box;
    border: 1px solid #ababab;
    background: #fff;
}
.right-col .check {
    margin-left: 1px;
}

.grid-panel {
    flex: 1;
    border: 1px solid #ababab;
    border-bottom: 0;
    min-height: 0;
}
.toolbar {
    height: 27px;
    display: flex;
    align-items: center;
    padding-left: 2px;
}
.tb {
    width: 26px;
    height: 22px;
    display: flex;
    align-items: center;
    justify-content: center;
    flex: none;
}
.tb-wide {
    width: 27px;
}
.tb-menu {
    width: 34px;
    justify-content: flex-start;
    padding-left: 5px;
    box-sizing: border-box;
    gap: 2px;
}
.tb-save {
    width: 45px;
    justify-content: flex-start;
    padding-left: 6px;
    box-sizing: border-box;
    gap: 11px;
}
.sep {
    width: 1px;
    height: 22px;
    background: #c4c4c4;
    margin: 0 3px;
    flex: none;
}
.filter-box {
    flex: none;
    width: 149px;
    padding-left: 6px;
    margin-left: 3px;
    margin-right: 9px;
}
.filter-box .val {
    padding-left: 3px;
}
.search-box {
    flex: none;
    width: 150px;
    margin-left: 5px;
}
.placeholder {
    color: #aaa;
    padding-left: 4px;
}
.search-btn {
    width: 16px;
    height: 18px;
    background: #f0f0f0;
    border-left: 1px solid #ababab;
    display: flex;
    align-items: center;
    justify-content: center;
}
.search-btn svg {
    width: 12px;
    height: 12px;
}
.sep-search {
    margin-left: 9px;
}
.grid-head {
    display: grid;
    grid-template-columns: 18px 145px 162px 137px 124px 120px 284px 172px 1fr;
    height: 20px;
    border-bottom: 1px solid #ababab;
    box-sizing: border-box;
}
.gh {
    border-left: 1px solid #ababab;
    padding-left: 3px;
    line-height: 21px;
    white-space: nowrap;
}
.gh:first-child {
    border-left: 0;
}

.scrollbar {
    flex: none;
    width: 17px;
    display: flex;
    flex-direction: column;
    background: #f0f0f0;
    margin-top: 1px;
}
.sb-btn {
    height: 16px;
    display: flex;
    align-items: center;
    justify-content: center;
}
.sb-btn svg {
    width: 9px;
    height: 6px;
}
.sb-thumb {
    height: 182px;
    background: #c8c8c8;
}
.sb-rest {
    flex: 1;
}

.statusbar {
    height: 24px;
    background: #0072c6;
    margin: 0 -1px;
    flex: none;
}

.arrow {
    position: absolute;
    left: 0;
    top: 0;
    width: 1287px;
    height: 490px;
    pointer-events: none;
}
```
